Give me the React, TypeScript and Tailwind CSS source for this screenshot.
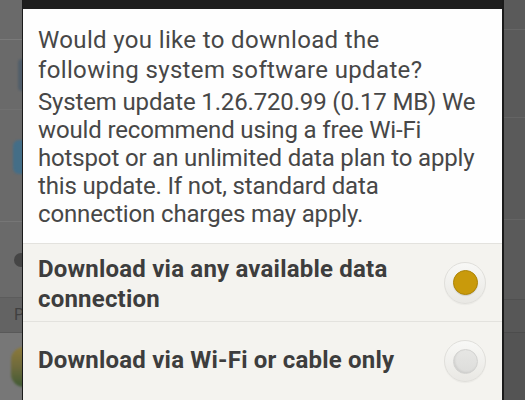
import React from 'react'

const headingLines = ['Would you like to download the', 'following system software update?']

const bodyLines = [
  'System update 1.26.720.99 (0.17 MB) We',
  'would recommend using a free Wi-Fi',
  'hotspot or an unlimited data plan to apply',
  'this update. If not, standard data',
  'connection charges may apply.',
]

function Radio({ checked }: { checked?: boolean }) {
  return (
    <div className="flex h-[42px] w-[42px] shrink-0 items-center justify-center self-center rounded-full border border-[#e0dfdb] bg-gradient-to-b from-[#f8f8f6] to-[#e9e8e4] shadow-[0_1px_1px_rgba(0,0,0,0.04)]">
      {checked ? (
        <div className="h-[25px] w-[25px] rounded-full border border-[#ad8507] bg-[#c99a0b] shadow-[0_1px_1px_rgba(0,0,0,0.12)]" />
      ) : (
        <div className="h-[25px] w-[25px] rounded-full border border-[#d2d2d0] bg-gradient-to-b from-[#e6e6e4] to-[#dddddb] shadow-[inset_1px_-1px_2px_rgba(0,0,0,0.08)]" />
      )}
    </div>
  )
}

function LeftStrip() {
  return (
    <div className="flex w-[22px] shrink-0 flex-col overflow-hidden bg-[#6a6a6a]">
      <div className="h-[40px] shrink-0 border-b border-[#7a7a7a]" />
      <div className="flex h-[70px] shrink-0 items-center border-b border-[#707070] pl-[18px]">
        <div className="h-[32px] w-[14px] shrink-0 rounded-[4px] bg-[#41566a] opacity-60 blur-[1px]" />
      </div>
      <div className="flex h-[112px] shrink-0 items-start border-b border-[#767676] pl-[13px] pt-[30px]">
        <div className="h-[34px] w-[20px] shrink-0 rounded-[6px] bg-[#3b6f8f] opacity-80 blur-[1px]" />
      </div>
      <div className="flex h-[76px] shrink-0 items-center border-b border-[#5c5c5c] pl-[14px]">
        <div className="h-[14px] w-[14px] shrink-0 rounded-full bg-[#454545] blur-[0.5px]" />
      </div>
      <div className="flex h-[35px] shrink-0 items-center border-b border-[#595959] bg-[#636363] pl-[14px]">
        <span className="text-[16px] leading-none text-[#404040]">P</span>
      </div>
      <div className="flex flex-1 items-center bg-[#777777] pl-[11px]">
        <div className="h-[40px] w-[26px] shrink-0 rounded-full bg-gradient-to-b from-[#8d7a3a] via-[#6e6a3c] to-[#3f5a34] blur-[1px]" />
      </div>
    </div>
  )
}

function RightStrip() {
  return (
    <div className="flex flex-1 flex-col bg-[#5a5a5a]">
      <div className="h-[30px] shrink-0 border-b border-[#666]" />
      <div className="h-[88px] shrink-0 border-b border-[#646464]" />
      <div className="h-[102px] shrink-0 border-b border-[#646464]" />
      <div className="h-[80px] shrink-0 border-b border-[#505050]" />
      <div className="h-[33px] shrink-0 border-b border-[#4c4c4c] bg-[#575757]" />
      <div className="flex-1 bg-[#545454]" />
    </div>
  )
}

export default function App() {
  return (
    <div className="flex h-[400px] w-[525px] overflow-hidden font-['Roboto',sans-serif]">
      <LeftStrip />
      <div className="flex w-[482px] shrink-0 flex-col border-l border-r-2 border-[#1b1b1b]">
        <div className="h-[9px] shrink-0 bg-[#1e1e1e]" />
        <div className="bg-[#fefefe] px-[15px] pb-[15px] pt-[16px] text-[24px] text-[#474747]">
          <div className="leading-[30px] tracking-[0.35px]">
            {headingLines.map((l) => (
              <div key={l} className="whitespace-nowrap">{l}</div>
            ))}
          </div>
          <div className="mt-[3px] leading-[28px] tracking-[-0.15px]">
            {bodyLines.map((l) => (
              <div key={l} className="whitespace-nowrap">{l}</div>
            ))}
          </div>
        </div>
        <div className="flex flex-1 flex-col bg-[#f4f3ef]">
          <div className="flex border-t border-b border-[#e3e2de] pr-[16px]">
            <div className="flex-1 pb-[7px] pl-[15px] pt-[10px] text-[24px] font-bold leading-[30px] tracking-[0.2px] text-[#3d3d3d]">
              <div>Download via any available data</div>
              <div>connection</div>
            </div>
            <Radio checked />
          </div>
          <div className="flex flex-1 pr-[16px]">
            <div className="flex-1 pb-[24px] pl-[15px] pt-[23px] text-[24px] font-bold leading-[30px] tracking-[0.2px] text-[#3d3d3d]">
              <div>Download via Wi-Fi or cable only</div>
            </div>
            <Radio />
          </div>
        </div>
      </div>
      <RightStrip />
    </div>
  )
}
